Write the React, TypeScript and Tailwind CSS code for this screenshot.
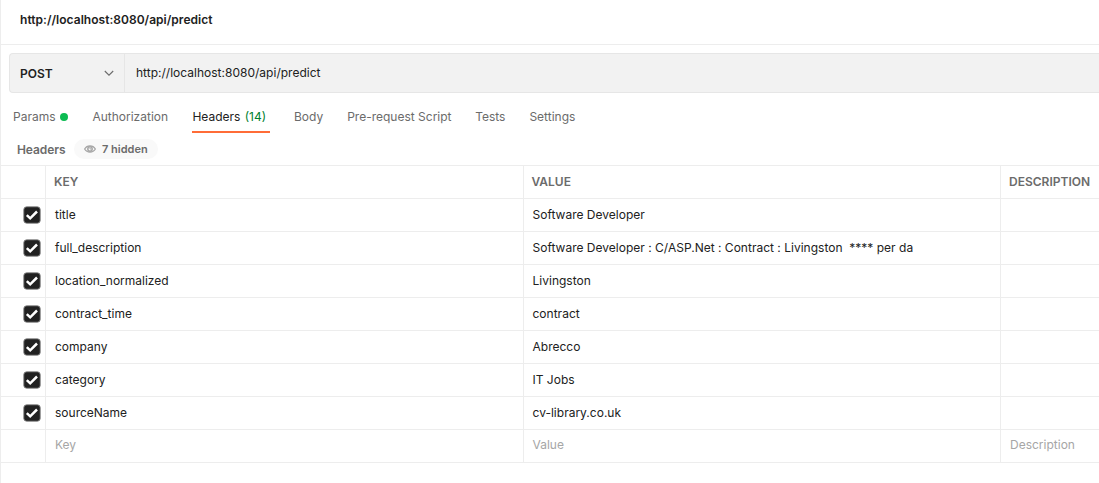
const rows = [
  ['title', 'Software Developer'],
  ['full_description', 'Software Developer : C/ASP.Net : Contract : Livingston  **** per da'],
  ['location_normalized', 'Livingston'],
  ['contract_time', 'contract'],
  ['company', 'Abrecco'],
  ['category', 'IT Jobs'],
  ['sourceName', 'cv-library.co.uk'],
];

const rowGrid =
  'grid h-[33px] grid-cols-[45px_478px_477px_1fr] border-b border-[#ededed] leading-4';
const cell = 'border-r border-[#ededed] whitespace-pre';

function Checkbox() {
  return (
    <svg className="ml-[22px] mt-[7px] h-[18px] w-[18px]" viewBox="0 0 18 18" fill="none">
      <rect x="0.75" y="0.75" width="16.5" height="16.5" rx="3" fill="#212121" stroke="#8c8c8c" strokeWidth="0.9" />
      <path d="M3.8 9.1L7.2 12.3L14 5.5" stroke="white" strokeWidth="2.5" />
    </svg>
  );
}

export default function App() {
  return (
    <div className="h-[483px] w-full overflow-hidden border-l border-[#ededed] bg-white font-['Inter',sans-serif] text-[12px] leading-4 text-[#212121]">
      <header className="h-[45px] border-b border-[#ededed] pl-[19px] pt-3 font-semibold tracking-[0.03px]">
        http://localhost:8080/api/predict
      </header>

      <div className="ml-2 mt-2 flex h-10 rounded-l border border-r-0 border-[#e6e6e6] bg-[#f2f2f2]">
        <button className="flex w-[115px] items-center justify-between border-r border-[#e6e6e6] pl-[10px] pr-[10px] font-semibold">
          <span className="pt-[2px]">POST</span>
          <svg className="h-[10px] w-[10px]" viewBox="0 0 10 10" fill="none">
            <path d="M0.8 3L5 7.2L9.2 3" stroke="#6b6b6b" strokeWidth="1.1" />
          </svg>
        </button>
        <div className="pl-[11px] pt-[11px] tracking-[0.01px]">http://localhost:8080/api/predict</div>
      </div>

      <nav className="ml-3 mt-4 flex h-6 gap-6 text-[#6b6b6b]">
        <span className="flex w-[55px] gap-1">
          Params
          <i className="mt-1 h-2 w-2 shrink-0 rounded-full bg-[#0cbb52]" />
        </span>
        <span className="w-[76px] pl-[0.4px]">Authorization</span>
        <span className="w-[78px] border-b-2 border-[#ff6c37] pl-[0.4px] text-[#212121]">
          Headers <span className="ml-px text-[#007f31]">(14)</span>
        </span>
        <span>Body</span>
        <span>Pre-request Script</span>
        <span className="-ml-[0.4px]">Tests</span>
        <span>Settings</span>
      </nav>

      <div className="flex h-[33px] border-b border-[#ededed] pl-4 text-[#6b6b6b]">
        <span className="w-[49px] pt-[9px] font-semibold tracking-[-0.08px]">Headers</span>
        <span className="ml-2 mt-[6px] flex h-5 w-[84px] items-center gap-[6px] rounded-full bg-[#f9f9f9] pl-[10px] text-[11px] font-semibold">
          <svg className="h-3 w-3" viewBox="0 0 12 12" fill="none">
            <path d="M0.6 6C3 1.8 9 1.8 11.4 6C9 10.2 3 10.2 0.6 6Z" stroke="#a6a6a6" strokeWidth="1.2" />
            <circle cx="6" cy="6" r="2.2" stroke="#a6a6a6" strokeWidth="1.5" />
            <path d="M6 4.5V6H7.3" stroke="#a6a6a6" strokeWidth="0.9" />
          </svg>
          7 hidden
        </span>
      </div>

      <div className={`${rowGrid} font-semibold text-[#6b6b6b]`}>
        <div className={cell} />
        <div className={`${cell} pl-2 pt-2`}>KEY</div>
        <div className={`${cell} pl-[7.5px] pt-2`}>VALUE</div>
        <div className="pl-2 pt-2">DESCRIPTION</div>
      </div>
      {rows.map(([key, value]) => (
        <div key={key} className={rowGrid}>
          <div className={cell}>
            <Checkbox />
          </div>
          <div className={`${cell} pl-[9px] pt-2`}>{key}</div>
          <div className={`${cell} pl-[8.5px] pt-2 tracking-[0.01px]`}>{value}</div>
          <div />
        </div>
      ))}
      <div className={`${rowGrid} text-[#a6a6a6]`}>
        <div className={cell} />
        <div className={`${cell} pl-[9px] pt-[7px]`}>Key</div>
        <div className={`${cell} pl-[8.5px] pt-[7px]`}>Value</div>
        <div className="pl-[9px] pt-[7px]">Description</div>
      </div>
    </div>
  );
}
